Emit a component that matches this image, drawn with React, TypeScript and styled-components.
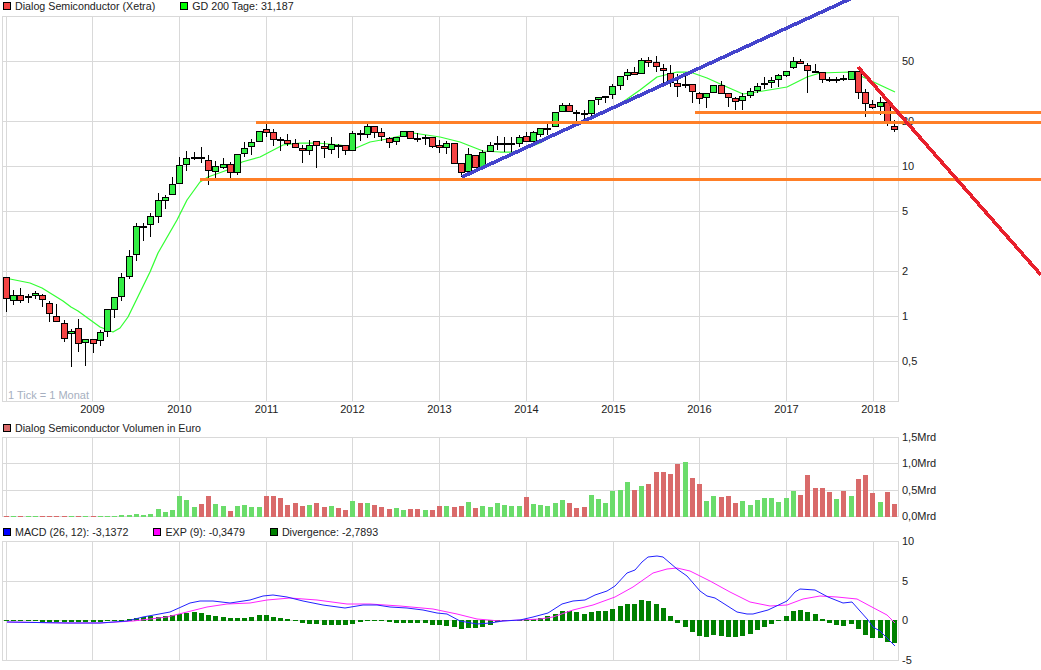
import React from "react";
import styled, { createGlobalStyle } from "styled-components";

const GlobalStyle = createGlobalStyle`
  html, body {
    margin: 0;
    background: #fff;
  }
`;

const Page = styled.div`
  position: relative;
  width: 1041px;
  height: 670px;
  overflow: hidden;
  font-family: "Liberation Sans", Arial, sans-serif;
  font-size: 10.7px;
  color: #222;
`;

const LegendRow = styled.div<{ $first?: boolean }>`
  display: flex;
  gap: 25px;
  height: ${(p) => (p.$first ? 16 : 17)}px;
  padding: ${(p) => (p.$first ? 0 : 2)}px 0 0 3px;
  box-sizing: border-box;
  line-height: 12px;
`;

const LegendItem = styled.div`
  display: flex;
  align-items: center;
  height: 12px;
  gap: 4px;
  white-space: nowrap;
`;

const Swatch = styled.span<{ $color: string }>`
  width: 6px;
  height: 6px;
  background: ${(p) => p.$color};
  border: 1px solid #000;
`;

const ChartSvg = styled.svg`
  display: block;
  overflow: visible;
`;

const Overlay = styled.svg`
  position: absolute;
  top: 0;
  left: 0;
  pointer-events: none;
`;

const GridLine = styled.line`
  stroke: #d9d9d9;
  stroke-width: 1;
`;

const AxisText = styled.text`
  font-family: "Liberation Sans", Arial, sans-serif;
  font-size: 11px;
  fill: #222;
`;

const YearText = styled(AxisText)`
  text-anchor: middle;
`;

const TickNote = styled(AxisText)`
  fill: #a6afc0;
`;

const Wick = styled.rect`
  fill: #000;
`;

const Body = styled.rect<{ $up: boolean }>`
  fill: ${(p) => (p.$up ? "#33ee44" : "#f44444")};
  stroke: #000;
  stroke-width: 1;
`;

const VolumeBar = styled.rect<{ $up: boolean }>`
  fill: ${(p) => (p.$up ? "#6bdc6b" : "#d96a6a")};
`;

const DivergenceBar = styled.rect`
  fill: #008000;
`;

const Curve = styled.polyline<{ $color: string; $bold?: boolean }>`
  fill: none;
  stroke: ${(p) => p.$color};
  stroke-width: ${(p) => (p.$bold ? 1.25 : 1)};
  stroke-linejoin: round;
`;

const TrendLine = styled.line<{ $color: string; $diagonal?: boolean }>`
  stroke: ${(p) => p.$color};
  stroke-width: ${(p) => (p.$diagonal ? 3.6 : 3)};
  shape-rendering: crispEdges;
`;

const years = [
  { x: 92, label: "2009" },
  { x: 179, label: "2010" },
  { x: 266, label: "2011" },
  { x: 352, label: "2012" },
  { x: 439, label: "2013" },
  { x: 526, label: "2014" },
  { x: 613, label: "2015" },
  { x: 699, label: "2016" },
  { x: 786, label: "2017" },
  { x: 873, label: "2018" },
];

// up, bodyTop, bodyBottom, wickTop, wickBottom (page pixels)
const candles: number[][] = [
  [0, 277, 299, 277, 312], [1, 295, 301, 290, 305], [0, 295, 301, 288, 303], [1, 296, 298, 294, 303],
  [1, 293, 296, 291, 299], [0, 295, 300, 294, 307], [0, 303, 314, 301, 322], [0, 316, 322, 304, 322],
  [0, 323, 339, 320, 342], [1, 331, 334, 329, 367], [0, 328, 344, 319, 352], [1, 339, 343, 339, 366],
  [0, 339, 344, 339, 353], [1, 332, 341, 330, 346], [1, 309, 332, 309, 337], [1, 297, 310, 297, 318],
  [1, 277, 297, 273, 301], [1, 256, 277, 250, 279], [1, 226, 255, 223, 261], [1, 226, 227, 223, 241],
  [1, 216, 225, 213, 237], [1, 200, 217, 193, 223], [1, 197, 201, 195, 209], [1, 184, 195, 177, 195],
  [1, 165, 184, 157, 184], [1, 158, 165, 151, 171], [1, 157, 158, 152, 160], [0, 157, 159, 147, 163],
  [0, 160, 171, 155, 185], [1, 166, 172, 161, 178], [1, 164, 168, 158, 169], [0, 164, 173, 162, 178],
  [1, 154, 173, 154, 175], [1, 148, 154, 142, 157], [1, 142, 147, 139, 155], [1, 131, 142, 131, 142],
  [0, 129, 133, 124, 137], [0, 132, 140, 129, 146], [0, 139, 141, 137, 151], [0, 140, 144, 134, 146],
  [0, 143, 148, 139, 148], [0, 148, 151, 145, 163], [1, 145, 151, 140, 155], [0, 141, 146, 141, 168],
  [0, 146, 149, 141, 158], [1, 144, 150, 137, 154], [0, 145, 146, 144, 158], [0, 145, 151, 145, 155],
  [1, 133, 151, 131, 151], [0, 133, 135, 130, 141], [1, 126, 135, 124, 138], [0, 126, 133, 126, 138],
  [0, 132, 137, 128, 141], [0, 138, 143, 137, 148], [1, 137, 142, 137, 145], [1, 131, 137, 131, 137],
  [0, 131, 139, 131, 139], [0, 138, 139, 133, 142], [1, 137, 138, 135, 145], [0, 137, 147, 137, 148],
  [0, 145, 148, 140, 153], [1, 143, 148, 141, 154], [0, 143, 164, 143, 164], [0, 163, 173, 163, 177],
  [1, 154, 172, 148, 172], [0, 155, 168, 155, 168], [1, 152, 168, 150, 168], [1, 145, 152, 142, 152],
  [1, 143, 144, 136, 150], [1, 143, 144, 137, 152], [1, 143, 144, 137, 152], [1, 137, 144, 135, 147],
  [0, 136, 142, 132, 142], [1, 132, 142, 131, 143], [1, 128, 135, 128, 137], [1, 128, 129, 123, 135],
  [1, 112, 127, 112, 127], [1, 105, 112, 103, 112], [0, 105, 112, 103, 112], [0, 112, 113, 110, 122],
  [0, 113, 114, 110, 122], [1, 100, 114, 100, 120], [1, 97, 100, 97, 105], [1, 96, 97, 96, 103],
  [1, 86, 95, 84, 99], [1, 76, 86, 76, 90], [1, 72, 76, 69, 80], [0, 72, 75, 67, 75],
  [1, 60, 74, 58, 74], [0, 60, 63, 57, 67], [0, 62, 67, 56, 72], [0, 68, 71, 64, 83],
  [0, 73, 83, 65, 87], [0, 83, 87, 74, 97], [1, 84, 86, 76, 88], [0, 84, 92, 84, 103],
  [0, 93, 99, 92, 104], [1, 93, 98, 93, 108], [1, 85, 93, 85, 93], [0, 85, 94, 81, 94],
  [0, 93, 98, 93, 107], [0, 98, 102, 97, 110], [1, 96, 101, 93, 110], [1, 91, 96, 88, 98],
  [1, 86, 91, 83, 93], [1, 83, 85, 77, 89], [1, 80, 83, 77, 88], [1, 75, 80, 74, 87],
  [1, 71, 76, 71, 77], [1, 61, 68, 57, 69], [0, 61, 64, 59, 64], [0, 65, 71, 63, 93],
  [0, 71, 72, 64, 73], [0, 72, 80, 72, 83], [0, 79, 81, 77, 82], [1, 79, 81, 77, 83],
  [0, 78, 80, 75, 81], [1, 71, 80, 71, 80], [0, 71, 93, 71, 99], [0, 92, 104, 89, 117],
  [0, 104, 108, 100, 109], [1, 102, 107, 97, 115], [0, 102, 123, 102, 126], [0, 126, 130, 120, 132],
];

const volumes = [
  1, 1, 1, 1, 1, 1, 1, 1, 1, 1, 1, 1, 1, 1, 1, 1, 2, 2, 3, 2, 3, 8, 5, 7, 21, 17, 10, 13, 21, 13, 11, 6,
  11, 12, 10, 10, 21, 21, 19, 12, 14, 11, 12, 14, 10, 11, 9, 7, 16, 14, 14, 12, 10, 8, 9, 7, 8, 8, 7, 7,
  11, 11, 10, 11, 15, 9, 11, 10, 14, 12, 11, 11, 20, 13, 12, 11, 14, 17, 14, 9, 10, 22, 18, 14, 26, 27,
  35, 27, 31, 33, 45, 45, 43, 53, 55, 39, 33, 16, 21, 20, 21, 14, 16, 12, 17, 19, 19, 15, 19, 26, 22, 42,
  29, 29, 25, 18, 26, 21, 38, 42, 24, 15, 25, 13,
];

const divergence = [
  0, 0, 0, 0, 0, -2, -2, -2, -2, -2, -2, -2, -2, -2, 0, 0, 0, 1, 2, 3, 4, 3, 4, 5, 6, 7, 8, 7, 5, 4, 3, 2,
  2, 2, 3, 5, 5, 3, 2, 1, -1, -3, -4, -4, -5, -5, -5, -5, -4, -2, -1, 0, -1, -2, -3, -3, -3, -3, -3, -5,
  -5, -6, -7, -9, -8, -8, -7, -5, -2, -1, -1, 0, 1, 1, 2, 4, 6, 9, 9, 8, 6, 8, 9, 9, 11, 14, 16, 16, 20,
  19, 16, 12, 4, -3, -7, -12, -16, -17, -15, -16, -17, -17, -16, -14, -10, -7, -4, -1, 4, 9, 10, 8, 6, 1,
  -3, -5, -6, -4, -9, -15, -18, -18, -22, -23,
];

const gd200 =
  "10,279 30,283 42,288 63,301 71,307 78,311 100,327 113,332 120,328 128,317 150,272 158,253 177,220 187,200 200,182 208,177 233,168 242,162 260,157 283,145 300,143 317,143 340,145 356,148 370,142 387,139 413,133 440,137 460,142 483,151 500,152 517,152 540,143 557,133 580,122 620,104 640,90 657,77 677,72 690,72 707,78 727,87 743,94 763,91 787,87 807,77 820,73 850,72 863,77 880,85 895,92";

const macdLine =
  "7,622 67,623 100,623 127,621 143,617 170,612 190,603 200,601 213,601 230,603 250,600 263,596 273,595 287,597 303,601 323,605 345,608 363,605 377,605 390,607 407,608 423,610 437,613 447,614 460,621 477,624 490,623 503,621 520,620 533,617 548,613 562,604 573,601 585,600 595,595 607,591 615,586 627,573 635,570 642,562 648,557 657,556 663,557 677,569 687,576 700,591 707,596 715,598 737,612 747,614 753,614 768,610 787,601 795,592 800,589 815,590 828,597 843,603 852,602 868,620 873,627 880,631 895,646";

const expLine =
  "7,622 67,623 100,623 133,621 167,617 187,612 207,607 227,604 250,603 267,600 290,598 317,600 347,604 370,604 400,606 433,609 457,614 477,619 500,621 520,620 540,619 553,617 573,610 593,605 615,597 633,587 653,573 667,569 677,568 690,571 710,581 730,592 750,602 770,606 787,605 803,599 820,596 837,597 857,599 870,606 887,615 895,623";

const barX = (i: number) => Math.floor(6.4 + 7.22 * i);

const VerticalGrid = ({ top, bottom }: { top: number; bottom: number }) => (
  <>
    {[2, 6, ...years.map((y) => y.x), 898].map((x) => (
      <GridLine key={x} x1={x + 0.5} x2={x + 0.5} y1={top} y2={bottom} />
    ))}
  </>
);

const HorizontalGrid = ({ rows }: { rows: number[] }) => (
  <>
    {rows.map((y) => (
      <GridLine key={y} x1={2} x2={899} y1={y + 0.5} y2={y + 0.5} />
    ))}
  </>
);

const PriceChart = () => (
  <ChartSvg width={1041} height={404} viewBox="0 16 1041 404">
    <VerticalGrid top={16} bottom={402} />
    <HorizontalGrid rows={[16, 61, 121, 166, 211, 271, 316, 361, 401]} />
    {[
      { y: 65, label: "50" },
      { y: 125, label: "20" },
      { y: 170, label: "10" },
      { y: 215, label: "5" },
      { y: 275, label: "2" },
      { y: 320, label: "1" },
      { y: 365, label: "0,5" },
    ].map((t) => (
      <AxisText key={t.label} x={902} y={t.y}>
        {t.label}
      </AxisText>
    ))}
    {years.map((y) => (
      <YearText key={y.label} x={y.x + 0.5} y={413}>
        {y.label}
      </YearText>
    ))}
    <TickNote x={8} y={399}>
      1 Tick = 1 Monat
    </TickNote>
    <Curve $color="#33ff33" $bold points={gd200} />
    {candles.map(([up, top, bottom, wickTop, wickBottom], i) => (
      <g key={i}>
        <Wick x={barX(i)} y={wickTop} width={1} height={wickBottom - wickTop} />
        <Body
          $up={up === 1}
          x={barX(i) - 2.5}
          y={top + 0.5}
          width={6}
          height={Math.max(1, bottom - top - 1)}
        />
      </g>
    ))}
  </ChartSvg>
);

const VolumeChart = () => (
  <ChartSvg width={1041} height={87} viewBox="0 437 1041 87">
    <VerticalGrid top={437} bottom={517} />
    <HorizontalGrid rows={[437, 463, 490, 516]} />
    {[
      { y: 441, label: "1,5Mrd" },
      { y: 467, label: "1,0Mrd" },
      { y: 494, label: "0,5Mrd" },
      { y: 520, label: "0,0Mrd" },
    ].map((t) => (
      <AxisText key={t.label} x={902} y={t.y}>
        {t.label}
      </AxisText>
    ))}
    {volumes.map((h, i) => (
      <VolumeBar key={i} $up={candles[i][0] === 1} x={barX(i) - 2} y={517 - h} width={5} height={h} />
    ))}
  </ChartSvg>
);

const MacdChart = () => (
  <ChartSvg width={1041} height={129} viewBox="0 541 1041 129">
    <VerticalGrid top={541} bottom={661} />
    <HorizontalGrid rows={[541, 581, 620, 660]} />
    {[
      { y: 545, label: "10" },
      { y: 585, label: "5" },
      { y: 624, label: "0" },
      { y: 664, label: "-5" },
    ].map((t) => (
      <AxisText key={t.label} x={902} y={t.y}>
        {t.label}
      </AxisText>
    ))}
    {divergence.map((v, i) => (
      <DivergenceBar
        key={i}
        x={barX(i) - 2}
        y={v > 0 ? 620 - v : 620}
        width={5}
        height={v > 0 ? v + 1 : Math.max(1, -v)}
      />
    ))}
    <Curve $color="#ff22ff" points={expLine} />
    <Curve $color="#2222ff" points={macdLine} />
  </ChartSvg>
);

const App = () => (
  <Page>
    <GlobalStyle />
    <LegendRow $first>
      <LegendItem>
        <Swatch $color="#f44444" />
        Dialog Semiconductor (Xetra)
      </LegendItem>
      <LegendItem>
        <Swatch $color="#00ff00" />
        GD 200 Tage: 31,187
      </LegendItem>
    </LegendRow>
    <PriceChart />
    <LegendRow>
      <LegendItem>
        <Swatch $color="#d96a6a" />
        Dialog Semiconductor Volumen in Euro
      </LegendItem>
    </LegendRow>
    <VolumeChart />
    <LegendRow>
      <LegendItem>
        <Swatch $color="#0000ff" />
        MACD (26, 12): -3,1372
      </LegendItem>
      <LegendItem>
        <Swatch $color="#ff00ff" />
        EXP (9): -0,3479
      </LegendItem>
      <LegendItem>
        <Swatch $color="#008000" />
        Divergence: -2,7893
      </LegendItem>
    </LegendRow>
    <MacdChart />
    <Overlay width={1041} height={670} viewBox="0 0 1041 670">
      <TrendLine $color="#4444cc" $diagonal x1={462} y1={177} x2={850} y2={-1} />
      <TrendLine $color="#ff7f27" x1={256} y1={122.5} x2={1041} y2={122.5} />
      <TrendLine $color="#ff7f27" x1={200} y1={179.5} x2={1041} y2={179.5} />
      <TrendLine $color="#ff7f27" x1={695} y1={112.5} x2={1041} y2={112.5} />
      <TrendLine $color="#e8202c" $diagonal x1={858} y1={67} x2={1041} y2={275} />
    </Overlay>
  </Page>
);

export default App;
